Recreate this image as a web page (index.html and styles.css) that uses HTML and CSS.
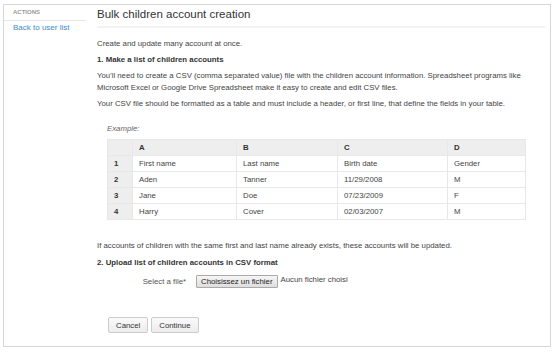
FILE: index.html
```html
<!DOCTYPE html>
<html lang="en">
<head>
    <meta charset="UTF-8">
    <title>Bulk children account creation</title>
    <link rel="stylesheet" href="styles.css">
</head>
<body>
    <div class="frame">
        <div class="sidebar">
            <div class="side-title">Actions</div>
            <a class="side-link" href="#">Back to user list</a>
        </div>

        <div class="main">
            <h1 class="page-title">Bulk children account creation</h1>

            <p class="intro">Create and update many account at once.</p>

            <h2 class="step">1. Make a list of children accounts</h2>
            <p>You'll need to create a CSV (comma separated value) file with the children account information. Spreadsheet programs like Microsoft Excel or Google Drive Spreadsheet make it easy to create and edit CSV files.</p>
            <p>Your CSV file should be formatted as a table and must include a header, or first line, that define the fields in your table.</p>

            <div class="example">
                <div class="example-label">Example:</div>
                <table class="sheet">
                    <thead>
                        <tr><th class="num"></th><th class="c-a">A</th><th class="c-b">B</th><th class="c-c">C</th><th>D</th></tr>
                    </thead>
                    <tbody>
                        <tr><th class="num">1</th><td>First name</td><td>Last name</td><td>Birth date</td><td>Gender</td></tr>
                        <tr><th class="num">2</th><td>Aden</td><td>Tanner</td><td>11/29/2008</td><td>M</td></tr>
                        <tr><th class="num">3</th><td>Jane</td><td>Doe</td><td>07/23/2009</td><td>F</td></tr>
                        <tr><th class="num">4</th><td>Harry</td><td>Cover</td><td>02/03/2007</td><td>M</td></tr>
                    </tbody>
                </table>
            </div>

            <p class="note">If accounts of children with the same first and last name already exists, these accounts will be updated.</p>

            <h2 class="step upload">2. Upload list of children accounts in CSV format</h2>
            <div class="file-row">
                <label class="file-label">Select a file*</label>
                <button class="file-btn" type="button">Choisissez un fichier</button>
                <span class="file-name">Aucun fichier choisi</span>
            </div>

            <div class="actions">
                <button class="btn" type="button">Cancel</button>
                <button class="btn" type="button">Continue</button>
            </div>
        </div>
    </div>
</body>
</html>
```

FILE: styles.css
```css
* { margin: 0; padding: 0; box-sizing: border-box; }
body {
    font-family: "Liberation Sans", Arial, sans-serif;
    font-size: 7.8px; line-height: 12px; color: #444; background: #fff;
}
.frame {
    margin: 4px 3px 0; height: 343px; border: 1px solid #d6d6d6;
    display: flex;
}
.sidebar { width: 82px; padding-top: 1px; }
.side-title {
    font-size: 6px; font-weight: bold; color: #999; text-transform: uppercase;
    padding: 0 0 2px 9px; border-bottom: 1px solid #e6e6e6;
}
.side-link {
    display: block; margin-top: 1px; padding-left: 9px; font-size: 8px;
    color: #3d8bcd; text-decoration: none;
}
.main { flex: 1; padding: 0 5px 0 11px; }
.page-title {
    font-size: 11.5px; font-weight: normal; color: #333; line-height: 16px;
    padding: 1px 0 4px; border-bottom: 2px solid #f3f3f3;
}
p { margin-bottom: 4px; }
.intro { margin-top: 10px; }
.step { font-size: 7.8px; font-weight: bold; color: #333; margin: 4px 0 4px; line-height: 12px; }
.step.upload { margin-top: 5px; }
.example { padding: 9px 0 0 10px; }
.example-label { font-style: italic; color: #666; margin-bottom: 4px; }
.sheet {
    width: 419px; border-collapse: collapse; border: 1px solid #e0e0e0;
}
.sheet th, .sheet td {
    height: 16px; padding: 0 6px; text-align: left; border: 1px solid #e8e8e8;
}
.sheet thead th { background: #eeeeee; font-weight: bold; color: #333; }
.sheet th.num { width: 25px; background: #eeeeee; font-weight: bold; color: #333; }
.sheet .c-a { width: 104px; }
.sheet .c-b { width: 101px; }
.sheet .c-c { width: 110px; }
.note { margin-top: 20px; }
.file-row { display: flex; align-items: center; margin-top: 6px; }
.file-label { width: 99px; text-align: right; padding-right: 10px; color: #555; }
.file-btn {
    font-family: inherit; font-size: 7.8px; color: #222; height: 13px;
    padding: 0 4px; border: 1px solid #a9a9a9; border-radius: 1px;
    background: linear-gradient(#f6f6f6, #dedede);
}
.file-name { margin-left: 3px; margin-top: -3px; }
.actions { margin: 29px 0 0 11px; display: flex; gap: 3px; }
.btn {
    font-family: inherit; font-size: 7.8px; color: #333; height: 16px;
    padding: 0 7px; border: 1px solid #ccc; border-radius: 2px;
    background: linear-gradient(#fafafa, #ececec);
}
```
